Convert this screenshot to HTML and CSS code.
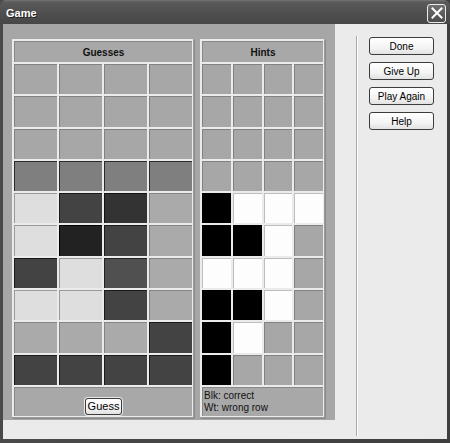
FILE: index.html
```html
<!DOCTYPE html>
<html>
<head>
<meta charset="utf-8">
<link rel="stylesheet" href="styles.css">
</head>
<body>
<div class="window">
  <div class="titlebar">
    <span class="title">Game</span>
    <span class="close"><svg width="12" height="12" viewBox="0 0 12 12"><path d="M1.5 1.5 L10.5 10.5 M10.5 1.5 L1.5 10.5" stroke="#fff" stroke-width="2" stroke-linecap="square"/></svg></span>
  </div>
  <div class="client">
    <div class="board">
      <div class="frame guesses">
        <div class="hdr">Guesses</div>
        <div class="c g"></div><div class="c g"></div><div class="c g"></div><div class="c g"></div>
        <div class="c g"></div><div class="c g"></div><div class="c g"></div><div class="c g"></div>
        <div class="c g"></div><div class="c g"></div><div class="c g"></div><div class="c g"></div>
        <div class="c m"></div><div class="c m"></div><div class="c m"></div><div class="c m"></div>
        <div class="c l"></div><div class="c d2"></div><div class="c d3"></div><div class="c g2"></div>
        <div class="c l"></div><div class="c d4"></div><div class="c d2"></div><div class="c g2"></div>
        <div class="c d2"></div><div class="c l"></div><div class="c d1"></div><div class="c g2"></div>
        <div class="c l"></div><div class="c l"></div><div class="c d2"></div><div class="c g2"></div>
        <div class="c g2"></div><div class="c g2"></div><div class="c g2"></div><div class="c d2"></div>
        <div class="c d2"></div><div class="c d2"></div><div class="c d2"></div><div class="c d2"></div>
        <div class="ftr center"><button class="btn guess">Guess</button></div>
      </div>
      <div class="frame hints">
        <div class="hdr">Hints</div>
        <div class="c g"></div><div class="c g"></div><div class="c g"></div><div class="c g"></div>
        <div class="c g"></div><div class="c g"></div><div class="c g"></div><div class="c g"></div>
        <div class="c g"></div><div class="c g"></div><div class="c g"></div><div class="c g"></div>
        <div class="c g"></div><div class="c g"></div><div class="c g"></div><div class="c g"></div>
        <div class="c b"></div><div class="c w"></div><div class="c w"></div><div class="c w"></div>
        <div class="c b"></div><div class="c b"></div><div class="c w"></div><div class="c g"></div>
        <div class="c w"></div><div class="c w"></div><div class="c w"></div><div class="c g"></div>
        <div class="c b"></div><div class="c b"></div><div class="c w"></div><div class="c g"></div>
        <div class="c b"></div><div class="c w"></div><div class="c g"></div><div class="c g"></div>
        <div class="c b"></div><div class="c g"></div><div class="c g"></div><div class="c g"></div>
        <div class="ftr legend">Blk: correct<br>Wt: wrong row</div>
      </div>
    </div>
    <div class="side">
      <div class="sep"></div>
      <div class="buttons">
        <button class="btn big">Done</button>
        <button class="btn big">Give Up</button>
        <button class="btn big">Play Again</button>
        <button class="btn big">Help</button>
      </div>
    </div>
  </div>
</div>
</body>
</html>
```

FILE: styles.css
```css
html, body {
  margin: 0;
  padding: 0;
  background: #333;
}
.window {
  width: 450px;
  height: 443px;
  background: linear-gradient(90deg, #4a4a4a, #3e3e3e);
  display: flex;
  flex-direction: column;
  font-family: "Liberation Sans", Arial, sans-serif;
  box-sizing: border-box;
}
.titlebar {
  height: 24px;
  flex: none;
  display: flex;
  align-items: center;
  justify-content: space-between;
  padding: 0 4px 0 6px;
  background: linear-gradient(#767676 0, #5a5a5a 2px, #505050 50%, #474747 100%);
  border-radius: 6px 6px 0 0;
}
.title {
  color: #fff;
  font-weight: bold;
  font-size: 11px;
  text-shadow: 1px 1px 0 #222;
  margin-top: 2px;
}
.close {
  width: 17px;
  height: 17px;
  margin-top: 2px;
  border: 1px solid #ececec;
  border-radius: 3px;
  background: linear-gradient(#707070, #4c4c4c);
  display: flex;
  align-items: center;
  justify-content: center;
}
.client {
  flex: 1;
  margin: 0 3px 4px 3px;
  background: #ebebeb;
  display: flex;
  align-items: flex-start;
}
.board {
  width: 332px;
  height: 396px;
  box-sizing: border-box;
  background: #a6a6a6;
  padding: 15px 9px 0 9px;
  display: flex;
  gap: 6px;
  align-items: flex-start;
  flex: none;
}
.frame {
  display: grid;
  gap: 2px;
  padding: 2px;
  background: #ebebeb;
  box-shadow: inset -1px -1px 0 #9a9a9a, 1px 1px 0 #8c8c8c;
  grid-template-rows: 21px repeat(10, 30.3px) 29px;
  box-sizing: border-box;
}
.guesses {
  width: 182px;
  grid-template-columns: repeat(4, 1fr);
}
.hints {
  width: 125px;
  grid-template-columns: repeat(4, 1fr);
}
.hdr, .ftr {
  grid-column: 1 / -1;
  background: #a8a8a8;
  border-top: 1px solid #888;
  border-left: 1px solid #888;
}
.hdr {
  font-weight: bold;
  font-size: 10px;
  color: #111;
  display: flex;
  align-items: center;
  justify-content: center;
}
.c {
  border-top: 1px solid rgba(0,0,0,0.22);
  border-left: 1px solid rgba(0,0,0,0.22);
}
.g  { background: #a7a7a7; }
.g2 { background: #aaaaaa; }
.m  { background: #7f7f7f; border-color: #2a2a2a; }
.l  { background: #dedede; border-color: #9a9a9a; }
.d1 { background: #505050; border-color: #222; }
.d2 { background: #434343; border-color: #1a1a1a; }
.d3 { background: #333333; border-color: #111; }
.d4 { background: #222222; border-color: #000; }
.b  { background: #000; border-color: #000; }
.w  { background: #fdfdfd; border-color: #bdbdbd; }
.center {
  display: flex;
  justify-content: center;
  align-items: flex-end;
  padding-bottom: 1px;
}
.legend {
  font-size: 10px;
  line-height: 12px;
  color: #111;
  padding: 2px 0 0 1px;
}
.btn {
  font-family: "Liberation Sans", Arial, sans-serif;
  font-size: 10px;
  color: #000;
  background: linear-gradient(#ffffff, #f4f4f4 60%, #e2e2e2);
  border: 1px solid #3c3c3c;
  border-radius: 3px;
  padding: 0;
  margin: 0;
}
.guess {
  width: 37px;
  height: 17px;
  box-shadow: 0 0 0 1px #e8e8e8;
  font-size: 11px;
}
.side {
  flex: 1;
  display: flex;
  align-items: flex-start;
}
.sep {
  margin-left: 21px;
  margin-top: 12px;
  width: 1px;
  height: 400px;
  background: #a8a8a8;
  border-right: 1px solid #fff;
}
.buttons {
  margin-left: 11px;
  margin-top: 13px;
  display: flex;
  flex-direction: column;
  gap: 7px;
}
.big {
  width: 65px;
  height: 18px;
}
```
